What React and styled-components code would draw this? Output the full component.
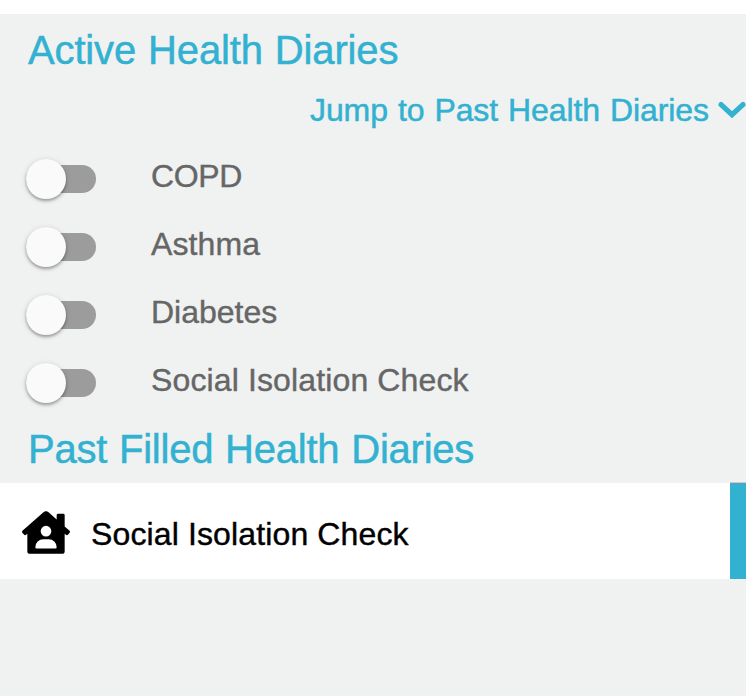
import React from "react";
import styled, { createGlobalStyle } from "styled-components";
import { FaHouseUser } from "react-icons/fa";

const Global = createGlobalStyle`
  * { box-sizing: border-box; }
  body { margin: 0; background: #f0f2f2; font-family: "Liberation Sans", Arial, sans-serif; }
`;

const Page = styled.main`
  height: 696px;
  border-top: 14px solid #fff;
  background: #f0f2f2;
  overflow: hidden;
`;
const Heading = styled.h1`
  margin: 0;
  padding-left: 28px;
  height: ${(p) => p.$height}px;
  line-height: ${(p) => p.$line}px;
  font-size: 40px;
  font-weight: 400;
  letter-spacing: ${(p) => p.$spacing}px;
  word-spacing: 1px;
  color: #32b1d1;
  white-space: nowrap;
  -webkit-text-stroke: 0.5px #32b1d1;
`;
const Label = styled.span`
  white-space: nowrap;
  letter-spacing: ${(p) => p.$spacing}px;
  word-spacing: ${(p) => p.$words || 0}px;
`;
const JumpLink = styled.a`
  display: flex;
  align-items: center;
  height: 48px;
  padding-left: 310px;
  font-size: 32px;
  color: #32b1d1;
  -webkit-text-stroke: 0.5px #32b1d1;
`;
const Chevron = styled.svg`
  flex: none;
  width: 28px;
  height: 20px;
  margin: 1px 0 0 auto;
  fill: none;
  stroke: currentColor;
  stroke-width: 5.2;
  stroke-linecap: round;
`;
const ToggleList = styled.div`
  padding-top: 8px;
`;
const ToggleRow = styled.label`
  display: flex;
  align-items: center;
  height: 68px;
  padding-left: 26px;
  font-size: 32px;
  color: #666;
  -webkit-text-stroke: 0.4px #666;
`;
const Track = styled.span`
  display: flex;
  align-items: center;
  width: 70px;
  height: 28px;
  margin: 5px 55px 0 0;
  border-radius: 14px;
  background: #9c9c9c;
`;
const Thumb = styled.span`
  width: 40px;
  height: 40px;
  border-radius: 50%;
  background: #fafafa;
  box-shadow: 0 2px 3px rgba(0, 0, 0, 0.3), 0 1px 6px rgba(0, 0, 0, 0.12);
`;
const DiaryRow = styled.div`
  display: flex;
  align-items: center;
  height: 96px;
  padding: 7px 0 0 22px;
  border-right: 16px solid #32b1d1;
  background: #fff;
  font-size: 32px;
  color: #000;
  -webkit-text-stroke: 0.4px #000;
`;
const HouseIcon = styled(FaHouseUser)`
  flex: none;
  width: 48px;
  height: 43px;
  margin-right: 21px;
  margin-bottom: 5px;
  stroke: none;
`;
const AccentCap = styled.div`
  height: 1px;
  width: 16px;
  margin: -1px 0 0 auto;
  background: #eebcbc;
`;

const diaries = [
  { name: "COPD", spacing: -0.35 },
  { name: "Asthma", spacing: 0.1 },
  { name: "Diabetes", spacing: 0 },
  { name: "Social Isolation Check", spacing: 0.13 },
];

export default function App() {
  return (
    <Page>
      <Global />
      <Heading $height={72} $line={72} $spacing={-0.14}>Active Health Diaries</Heading>
      <JumpLink>
        <Label $spacing={-0.09} $words={1.2}>Jump to Past Health Diaries</Label>
        <Chevron viewBox="0 0 28 20">
          <path d="M3.1 3.6L14 13.6L24.9 3.6" />
        </Chevron>
      </JumpLink>
      <ToggleList>
        {diaries.map(({ name, spacing }) => (
          <ToggleRow key={name}>
            <Track><Thumb /></Track>
            <Label $spacing={spacing}>{name}</Label>
          </ToggleRow>
        ))}
      </ToggleList>
      <Heading $height={69} $line={70} $spacing={-0.23}>Past Filled Health Diaries</Heading>
      <AccentCap />
      <DiaryRow>
        <HouseIcon />
        <Label $spacing={0.13}>Social Isolation Check</Label>
      </DiaryRow>
    </Page>
  );
}
